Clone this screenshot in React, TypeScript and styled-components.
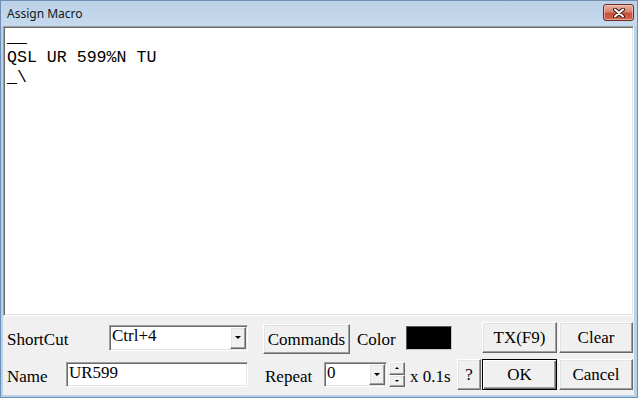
import React from "react";
import styled, { createGlobalStyle, css } from "styled-components";

const GlobalStyle = createGlobalStyle`
  html, body { margin: 0; padding: 0; background: #ffffff; }
  body { width: 638px; height: 398px; overflow: hidden; }
  * { box-sizing: border-box; }
`;

const Window = styled.div`
  width: 638px;
  height: 398px;
  border: 1px solid #6f90b3;
  background: #b9d2ec;
  display: flex;
  flex-direction: column;
`;

const TitleBar = styled.div`
  height: 25px;
  display: flex;
  align-items: flex-start;
  justify-content: space-between;
  padding: 0 3px 0 6px;
  background: linear-gradient(#bcd1e6, #c6daef);
`;

const Title = styled.span`
  font-family: "Noto Sans", "Open Sans", sans-serif;
  font-size: 12px;
  line-height: 16px;
  margin-top: 5px;
  color: #101820;
`;

const CloseButton = styled.div`
  width: 31px;
  height: 17px;
  margin-top: 3px;
  border: 1px solid #6c2a20;
  border-radius: 3px;
  background: linear-gradient(#e8b0a3 0%, #d98673 45%, #c7513b 55%, #d0664e 100%);
  box-shadow: inset 0 0 0 1px rgba(255, 220, 210, 0.55);
  display: flex;
  align-items: center;
  justify-content: center;
`;

const Client = styled.div`
  flex: 1;
  margin: 0 3px 2px 2px;
  background: #f0f0f0;
  display: flex;
  flex-direction: column;
`;

const sunken = css`
  border: 1px solid;
  border-color: #a0a0a0 #ffffff #ffffff #a0a0a0;
  box-shadow: inset 1px 1px 0 #696969, inset -1px -1px 0 #e3e3e3;
`;

const raised = css`
  border: 1px solid;
  border-color: #ffffff #696969 #696969 #ffffff;
  box-shadow: inset -1px -1px 0 #a0a0a0, inset 1px 1px 0 #e3e3e3;
  background: #f0f0f0;
`;

const Memo = styled.div`
  height: 290px;
  ${sunken};
  background: #ffffff;
  padding: 1px 0 0 3px;
  font-family: "Liberation Mono", "Courier New", monospace;
  font-size: 16.6px;
  line-height: 20px;
  white-space: pre;
  color: #000;
`;

const Panel = styled.div`
  height: 79px;
  padding: 6px 1px 5px 4px;
  display: flex;
  flex-direction: column;
  gap: 6px;
  font-family: "Liberation Serif", "Times New Roman", serif;
  font-size: 17px;
  color: #000;
`;

const Row = styled.div`
  height: 31px;
  display: flex;
  align-items: center;
`;

const Label = styled.span<{ $w: number; $ml?: number }>`
  width: ${(p) => p.$w}px;
  margin-left: ${(p) => p.$ml ?? 0}px;
  padding-top: 3px;
  line-height: 19px;
  white-space: nowrap;
`;

const Field = styled.div<{ $w: number; $h: number; $ml?: number }>`
  width: ${(p) => p.$w}px;
  height: ${(p) => p.$h}px;
  margin-left: ${(p) => p.$ml ?? 0}px;
  ${sunken};
  background: #ffffff;
  display: flex;
  padding: 1px;
`;

const FieldText = styled.span`
  flex: 1;
  padding-left: 1px;
  line-height: 15px;
  padding-top: 1px;
  white-space: nowrap;
  overflow: hidden;
`;

const DropButton = styled.div`
  width: 16px;
  height: 100%;
  ${raised};
  display: flex;
  align-items: center;
  justify-content: center;
`;

const Arrow = styled.span<{ $up?: boolean; $size: number }>`
  width: 0;
  height: 0;
  border-left: ${(p) => p.$size}px solid transparent;
  border-right: ${(p) => p.$size}px solid transparent;
  ${(p) =>
    p.$up
      ? `border-bottom: ${p.$size}px solid #000;`
      : `border-top: ${p.$size}px solid #000;`}
`;

const Spinner = styled.div`
  width: 16px;
  height: 25px;
  margin-left: 2px;
  display: flex;
  flex-direction: column;
`;

const SpinButton = styled.div`
  flex: 1;
  ${raised};
  display: flex;
  align-items: center;
  justify-content: center;
`;

const Button = styled.div<{ $w: number; $h?: number; $ml?: number; $shift?: number; $default?: boolean }>`
  width: ${(p) => p.$w}px;
  height: ${(p) => p.$h ?? 31}px;
  margin-left: ${(p) => p.$ml ?? 0}px;
  margin-top: ${(p) => p.$shift ?? 0}px;
  ${raised};
  ${(p) =>
    p.$default &&
    css`
      border: 1px solid #000;
      box-shadow: inset 1px 1px 0 #ffffff, inset -1px -1px 0 #696969, inset -2px -2px 0 #a0a0a0;
    `}
  display: flex;
  align-items: center;
  justify-content: center;
  line-height: 19px;
  white-space: nowrap;
`;

const ColorBox = styled.div<{ $ml?: number }>`
  width: 46px;
  height: 24px;
  margin-left: ${(p) => p.$ml ?? 0}px;
  background: #000;
  border: 1px solid;
  border-color: #5a5a5a #c8c8c8 #c8c8c8 #5a5a5a;
`;

const Combo: React.FC<{ w: number; h: number; ml?: number; text: string }> = ({ w, h, ml, text }) => (
  <Field $w={w} $h={h} $ml={ml}>
    <FieldText>{text}</FieldText>
    <DropButton>
      <Arrow $size={3.5} />
    </DropButton>
  </Field>
);

const memoText = "__\nQSL UR 599%N TU\n_\\";

export default function App() {
  return (
    <>
      <GlobalStyle />
      <Window>
        <TitleBar>
          <Title>Assign Macro</Title>
          <CloseButton>
            <svg width="12" height="10" viewBox="0 0 12 10">
              <path d="M2 1.5 L10 8.5 M10 1.5 L2 8.5" stroke="#3c1710" strokeWidth="4" strokeLinecap="round" />
              <path d="M2 1.5 L10 8.5 M10 1.5 L2 8.5" stroke="#ffffff" strokeWidth="2" strokeLinecap="round" />
            </svg>
          </CloseButton>
        </TitleBar>
        <Client>
          <Memo>{memoText}</Memo>
          <Panel>
            <Row>
              <Label $w={102}>ShortCut</Label>
              <Combo w={139} h={26} text="Ctrl+4" />
              <Button $w={87} $h={30} $ml={15} $shift={3}>Commands</Button>
              <Label $w={49} $ml={7}>Color</Label>
              <ColorBox />
              <Button $w={75} $ml={30}>TX(F9)</Button>
              <Button $w={74} $ml={2}>Clear</Button>
            </Row>
            <Row>
              <Label $w={59}>Name</Label>
              <Field $w={182} $h={25}>
                <FieldText>UR599</FieldText>
              </Field>
              <Label $w={59} $ml={17}>Repeat</Label>
              <Combo w={63} h={25} text="0" />
              <Spinner>
                <SpinButton>
                  <Arrow $up $size={2.5} />
                </SpinButton>
                <SpinButton>
                  <Arrow $size={2.5} />
                </SpinButton>
              </Spinner>
              <Label $w={47} $ml={5}>x 0.1s</Label>
              <Button $w={24}>?</Button>
              <Button $w={75} $ml={1} $default>OK</Button>
              <Button $w={74} $ml={2}>Cancel</Button>
            </Row>
          </Panel>
        </Client>
      </Window>
    </>
  );
}
